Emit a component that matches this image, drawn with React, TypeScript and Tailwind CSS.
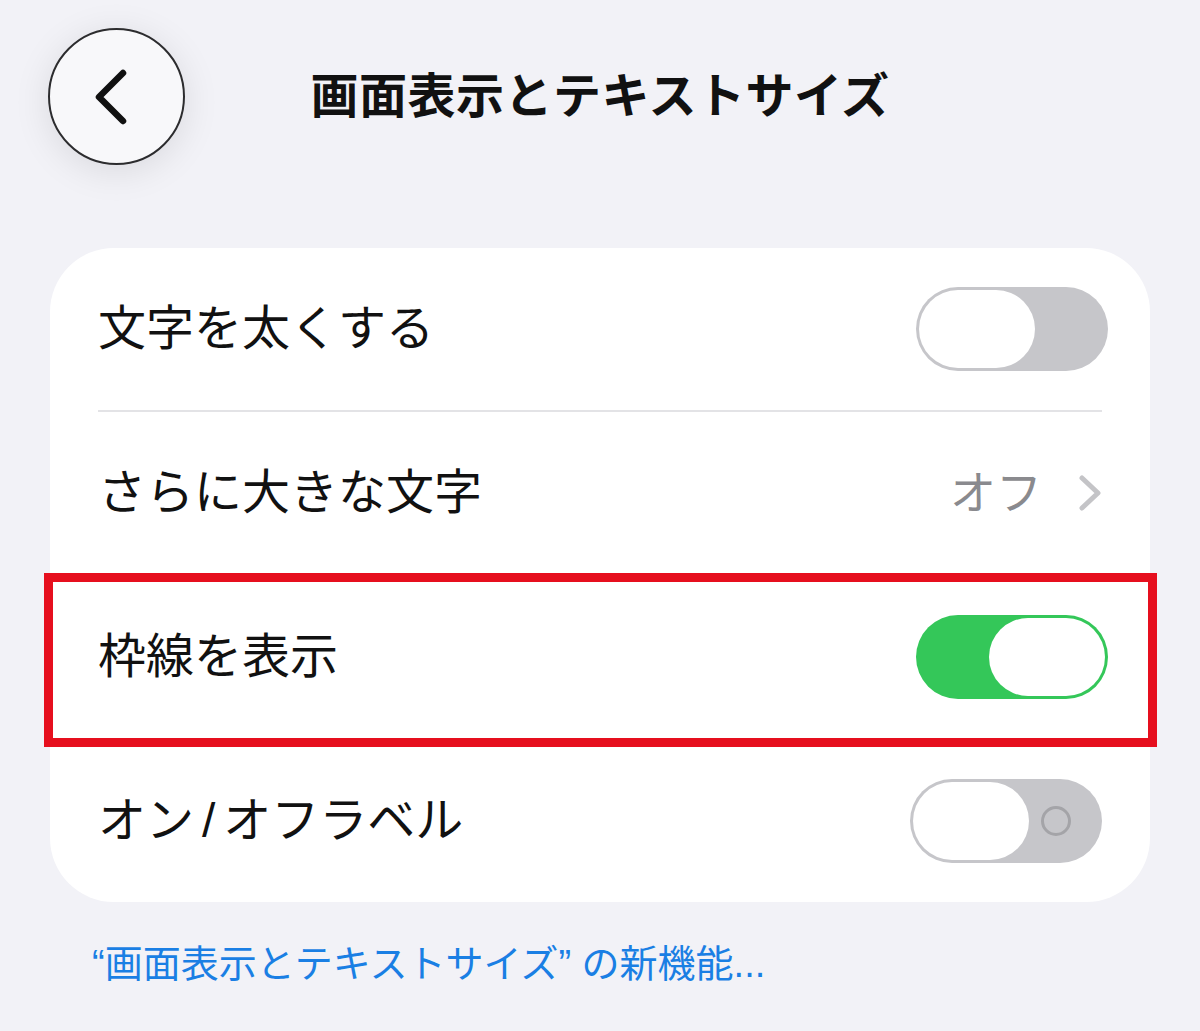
import React from 'react';

const Toggle: React.FC<{ on?: boolean; ring?: boolean; className?: string }> = ({ on = false, ring = false, className = '' }) => {
  return (
    <div
      className={`relative flex h-[84px] w-[192px] shrink-0 items-center rounded-full p-[3px] ${
        on ? 'justify-end bg-[#34c759]' : 'justify-start bg-[#c6c6ca]'
      } ${className}`}
    >
      {ring && (
        <span className="absolute right-[31px] top-1/2 h-[30px] w-[30px] -translate-y-1/2 rounded-full border-[3px] border-[#a4a4a8]" />
      )}
      <span className="h-[78px] w-[116px] rounded-full bg-white" />
    </div>
  );
};

const Row: React.FC<{ label: React.ReactNode; children: React.ReactNode }> = ({ label, children }) => (
  <div className="flex h-[162px] items-center justify-between pl-[48px] pr-[42px]">
    <span className="text-[48px] leading-none text-[#111]">{label}</span>
    {children}
  </div>
);

const App: React.FC = () => {
  return (
    <div className="min-h-[1031px] w-full bg-[#f2f2f7] font-['Liberation_Sans','Noto_Sans_CJK_JP',sans-serif]">
      {/* header */}
      <div className="grid grid-cols-[1fr_auto_1fr] items-center pt-[28px]">
        <div className="pl-[48px]">
          <button className="flex h-[137px] w-[137px] items-center justify-center rounded-full border-2 border-[#2c2c2e] bg-[#f8f8fa] shadow-[0_6px_36px_rgba(0,0,0,0.10)]">
            <svg width="40" height="60" viewBox="0 0 40 60" className="-ml-[8px]">
              <path d="M30 6 L6 30 L30 54" fill="none" stroke="#111" strokeWidth="6.5" strokeLinecap="round" strokeLinejoin="round" />
            </svg>
          </button>
        </div>
        <h1 className="text-[48px] font-bold leading-none tracking-[0.5px] text-[#111]">画面表示とテキストサイズ</h1>
        <div />
      </div>

      {/* settings card */}
      <div className="relative mx-[50px] mt-[83px] rounded-[64px] bg-white">
        <Row label="文字を太くする">
          <Toggle />
        </Row>
        <div className="ml-[48px] mr-[48px] h-[2px] bg-[#e3e3e6]" />
        <Row label="さらに大きな文字">
          <div className="flex items-center gap-[36px] pr-[6px]">
            <span className="text-[46px] leading-none text-[#8a8a8e]">オフ</span>
            <svg width="24" height="38" viewBox="0 0 24 38">
              <path d="M4 4 L20 19 L4 34" fill="none" stroke="#c4c4c7" strokeWidth="5" strokeLinecap="round" strokeLinejoin="round" />
            </svg>
          </div>
        </Row>
        <div className="ml-[48px] mr-[48px] h-[2px] bg-[#e3e3e6]" />
        <div className="relative">
          <Row label="枠線を表示">
            <Toggle on />
          </Row>
          <div className="pointer-events-none absolute -bottom-[9px] -left-[6px] -right-[7px] -top-[3px] border-[9px] border-[#e60f1e]" />
        </div>
        <div className="ml-[48px] mr-[48px] h-[2px] bg-[#e3e3e6]" />
        <Row
          label={
            <>
              オン<span className="mx-[8px]">/</span>オフラベル
            </>
          }
        >
          <Toggle ring className="mr-[6px]" />
        </Row>
      </div>

      {/* footer link */}
      <div className="pl-[92px] pt-[40px]">
        <a href="#" className="text-[38px] leading-[1.2] text-[#1a7fe4]">
          “画面表示とテキストサイズ” の新機能...
        </a>
      </div>
    </div>
  );
};

export default App;
